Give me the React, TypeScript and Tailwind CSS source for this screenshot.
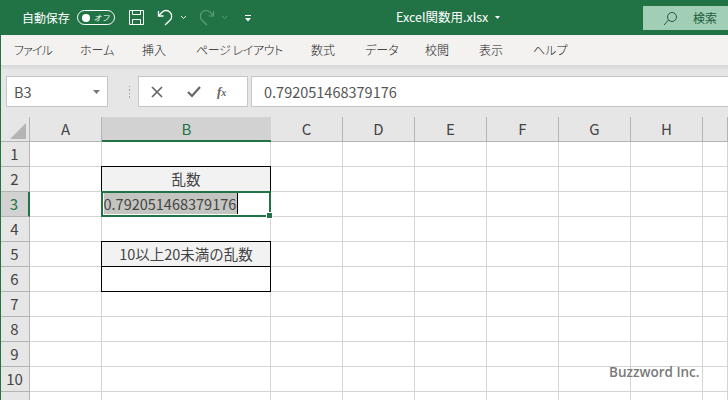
import React from "react";

const jp = "[font-family:'Noto_Sans_CJK_JP',sans-serif]";
const cols = ["A", "B", "C", "D", "E", "F", "G", "H", ""];
const rows = [1, 2, 3, 4, 5, 6, 7, 8, 9, 10, 11];
const tabs: [string, string][] = [
  ["ファイル", "w-[38px] tracking-[-0.9px]"],
  ["ホーム", "w-[34px]"],
  ["挿入", "w-[26px]"],
  ["ページ レイアウト", "w-[87px] tracking-[-0.4px]"],
  ["数式", "w-[26px]"],
  ["データ", "w-[32px]"],
  ["校閲", "w-[26px]"],
  ["表示", "w-[26px]"],
  ["ヘルプ", "w-[32px]"],
];

function Cell({ r, c }: { r: number; c: string }) {
  if (c === "B" && r === 2)
    return (
      <div className="z-10 -mt-px -ml-px flex items-center justify-center border border-black bg-[#f2f2f2] text-[14.5px] text-[#444]">
        乱数
      </div>
    );
  if (c === "B" && r === 5)
    return (
      <div className="z-10 -mt-px -ml-px flex items-center justify-center border border-black bg-[#f2f2f2] text-[14.5px] text-[#444]">
        10以上20未満の乱数
      </div>
    );
  if (c === "B" && r === 6)
    return <div className="z-10 -mt-px -ml-px border border-black bg-white" />;
  if (c === "B" && r === 3)
    return (
      <div className="relative z-20 -mt-[1.5px] -ml-[1.5px] flex items-center border-2 border-[#217346] bg-white pl-[1px]">
        <span className="border-r border-black bg-[#c4c4c0] pr-[1px] text-[14.5px] leading-[21px] text-[#444]">
          0.792051468379176
        </span>
        <span className="absolute -right-[4px] -bottom-[4px] h-[7px] w-[7px] border border-white bg-[#217346]" />
      </div>
    );
  return <div className="border-r border-b border-[#d4d4d4] bg-white" />;
}

export default function App() {
  return (
    <div className={`relative flex h-[400px] w-[728px] flex-col overflow-hidden bg-[#e6e6e6] ${jp}`}>
      {/* title bar */}
      <div className="relative flex h-[35px] shrink-0 items-center bg-[#217346] text-white">
        <span className="ml-[22px] text-[12px] tracking-[-0.1px]">自動保存</span>
        <div className="ml-[7px] flex h-[15px] w-[38px] items-center justify-between rounded-full border border-white px-[4px]">
          <span className="h-[8px] w-[8px] rounded-full bg-white" />
          <span className="text-[8px] italic leading-none">オフ</span>
        </div>
        <svg className="ml-[13px]" width="17" height="17" viewBox="0 0 17 17" fill="none" stroke="white" strokeWidth="1">
          <path d="M1.5 1.5h14v14h-14z" />
          <path d="M4.5 1.5v4h8v-4M4.5 15.5v-5h8v5" />
        </svg>
        <svg className="ml-[12px]" width="17" height="18" viewBox="0 0 17 18" fill="none" stroke="white" strokeWidth="1.3">
          <path d="M1.5 2v5h5" />
          <path d="M1.5 7L5 3.2a5.6 5.6 0 0 1 8 0a5.6 5.6 0 0 1 0 8L8 16" />
        </svg>
        <svg className="ml-[6px]" width="7" height="5" viewBox="0 0 7 5" fill="none" stroke="white" strokeWidth="1">
          <path d="M1 1l2.5 2.5L6 1" />
        </svg>
        <svg className="ml-[11px]" width="17" height="18" viewBox="0 0 17 18" fill="none" stroke="#5c9c7b" strokeWidth="1.2">
          <path d="M15.5 2v5h-5" />
          <path d="M15.5 7L12 3.2a5.6 5.6 0 0 0-8 0a5.6 5.6 0 0 0 0 8L9 16" />
        </svg>
        <svg className="ml-[6px]" width="7" height="5" viewBox="0 0 7 5" fill="none" stroke="#5c9c7b" strokeWidth="1">
          <path d="M1 1l2.5 2.5L6 1" />
        </svg>
        <svg className="ml-[16px]" width="8" height="8" viewBox="0 0 8 8" fill="white">
          <path d="M1 1h6v1H1z" />
          <path d="M1 4h6L4 7.5z" />
        </svg>
        <div className="absolute left-[396px] top-0 flex h-[35px] items-center text-[12.5px]">
          Excel関数用.xlsx
          <svg className="ml-[7px]" width="5" height="3" viewBox="0 0 5 3" fill="white">
            <path d="M0 0h5L2.5 3z" />
          </svg>
        </div>
        <div className="absolute left-[643px] top-[6px] flex h-[24px] w-[85px] items-center bg-[#a0cfb5] text-[#1d5c3b]">
          <svg className="ml-[20px]" width="15" height="15" viewBox="0 0 15 15" fill="none" stroke="#22593d" strokeWidth="1">
            <circle cx="9" cy="6" r="4.5" />
            <path d="M5.5 9L1 14" />
          </svg>
          <span className="ml-[15px] text-[12px]">検索</span>
        </div>
      </div>
      {/* ribbon tabs */}
      <div className="flex h-[30px] shrink-0 items-center gap-[28px] bg-[#f3f2f1] pl-[14px] text-[12px] font-light text-[#222] [font-feature-settings:'palt']">
        {tabs.map(([t, w]) => (
          <span key={t} className={`${w} whitespace-nowrap`}>
            {t}
          </span>
        ))}
      </div>
      {/* shadow */}
      <div className="h-[5px] shrink-0 bg-gradient-to-b from-[#d6d6d6] to-[#e6e6e6]" />
      {/* formula bar */}
      <div className="flex h-[47px] shrink-0 items-start pl-[6px] pt-[6px]">
        <div className="flex h-[31px] w-[102px] items-center justify-between border border-[#c6c6c6] bg-white pl-[7px] pr-[7px] text-[14.5px] text-[#555]">
          B3
          <svg width="7" height="4" viewBox="0 0 7 4" fill="#777">
            <path d="M0 0h7L3.5 4z" />
          </svg>
        </div>
        <div className="ml-[13px] flex h-[31px] w-[17px] flex-col items-center justify-center gap-[2px]">
          {[0, 1, 2, 3].map((i) => (
            <span key={i} className="h-[1.5px] w-[1.5px] bg-[#a6a6a6]" />
          ))}
        </div>
        <div className="flex h-[31px] w-[110px] items-center border border-[#c6c6c6] bg-white">
          <svg className="ml-[12px]" width="12" height="12" viewBox="0 0 12 12" stroke="#666" strokeWidth="1.7" fill="none">
            <path d="M1 1l10 10M11 1L1 11" />
          </svg>
          <svg className="ml-[24px]" width="14" height="12" viewBox="0 0 14 12" stroke="#666" strokeWidth="2.2" fill="none">
            <path d="M1 6l4 4 8-9" />
          </svg>
          <span className="ml-[16px] font-['Liberation_Serif',serif] text-[13px] font-bold italic leading-none text-[#666]">
            f<span className="text-[10px]">x</span>
          </span>
        </div>
        <div className="ml-[3px] flex h-[31px] flex-1 items-center border border-r-0 border-[#c6c6c6] bg-white pl-[12px] text-[14.5px] text-[#555]">
          0.792051468379176
        </div>
      </div>
      {/* sheet */}
      <div className="grid flex-1 grid-cols-[30px_72px_169px_72px_72px_72px_72px_72px_72px_25px] grid-rows-[25px_repeat(11,25px)] overflow-hidden">
        <div className="flex items-end justify-end border-r border-b border-[#b4b4b4] bg-[#e6e6e6] pb-[2px] pr-[3px]">
          <span className="h-0 w-0 border-b-[16px] border-l-[16px] border-b-[#b4b4b4] border-l-transparent" />
        </div>
        {cols.map((c, i) =>
          c === "B" ? (
            <div key={i} className="flex items-center justify-center border-b-2 border-[#217346] bg-[#d2d2d2] pt-[1px] text-[15px] text-[#217346]">
              B
            </div>
          ) : (
            <div key={i} className="flex items-center justify-center border-r border-b border-[#b4b4b4] pt-[1px] text-[15px] text-[#444]">
              {c}
            </div>
          )
        )}
        {rows.map((r) => (
          <React.Fragment key={r}>
            {r === 3 ? (
              <div className="flex items-center justify-center border-r-2 border-b border-r-[#217346] border-b-[#b4b4b4] bg-[#d2d2d2] text-[15px] text-[#217346]">
                3
              </div>
            ) : (
              <div className="flex items-center justify-center border-r border-b border-[#b4b4b4] text-[15px] text-[#444]">
                {r === 11 ? "" : r}
              </div>
            )}
            {cols.map((c, i) => (
              <Cell key={i} r={r} c={c} />
            ))}
          </React.Fragment>
        ))}
      </div>
      <span className="absolute left-0 top-[35px] bottom-0 z-40 w-px bg-[#217346]" />
      <span className="absolute left-[609px] top-[362px] z-30 font-['Open_Sans',sans-serif] text-[13.5px] font-semibold leading-[20px] text-[#7a7a7a]">
        Buzzword Inc.
      </span>
    </div>
  );
}
